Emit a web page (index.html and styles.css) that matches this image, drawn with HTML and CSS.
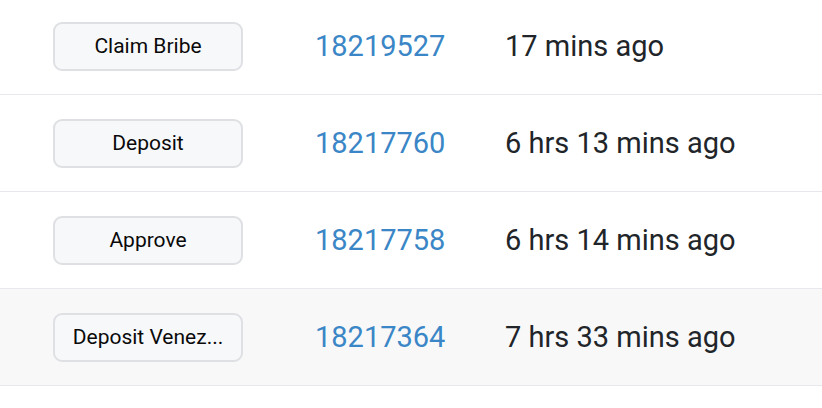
FILE: index.html
```html
<!DOCTYPE html>
<html>
<head>
<meta charset="utf-8">
<link rel="stylesheet" href="styles.css">
</head>
<body>
<div class="table">
  <div class="row">
    <div class="cell-btn"><span class="method">Claim Bribe</span></div>
    <a class="block" href="#">18219527</a>
    <span class="age">17 mins ago</span>
  </div>
  <div class="row">
    <div class="cell-btn"><span class="method">Deposit</span></div>
    <a class="block" href="#">18217760</a>
    <span class="age">6 hrs 13 mins ago</span>
  </div>
  <div class="row">
    <div class="cell-btn"><span class="method">Approve</span></div>
    <a class="block" href="#">18217758</a>
    <span class="age">6 hrs 14 mins ago</span>
  </div>
  <div class="row row-hover">
    <div class="cell-btn"><span class="method">Deposit Venez...</span></div>
    <a class="block" href="#">18217364</a>
    <span class="age">7 hrs 33 mins ago</span>
  </div>
</div>
</body>
</html>
```

FILE: styles.css
```css
html, body {
  margin: 0;
  padding: 0;
  background: #ffffff;
  font-family: Roboto, "Liberation Sans", sans-serif;
}
.table {
  margin-top: -2px;
}
.row {
  display: grid;
  grid-template-columns: 262px 190px 1fr;
  align-items: center;
  height: 96px;
  padding-left: 53px;
  border-bottom: 1px solid #e7e7ee;
}
.row-hover {
  background: #f8f8f9;
}
.cell-btn {
  display: flex;
}
.method {
  box-sizing: border-box;
  width: 190px;
  height: 49px;
  display: flex;
  align-items: center;
  justify-content: center;
  background: #f7f8fa;
  border: 2px solid #dfe0e3;
  border-radius: 9px;
  font-size: 21px;
  color: #0a0a0a;
}
.block {
  font-size: 29px;
  color: #3a86c6;
  text-decoration: none;
}
.age {
  font-size: 29px;
  color: #212529;
}
```
